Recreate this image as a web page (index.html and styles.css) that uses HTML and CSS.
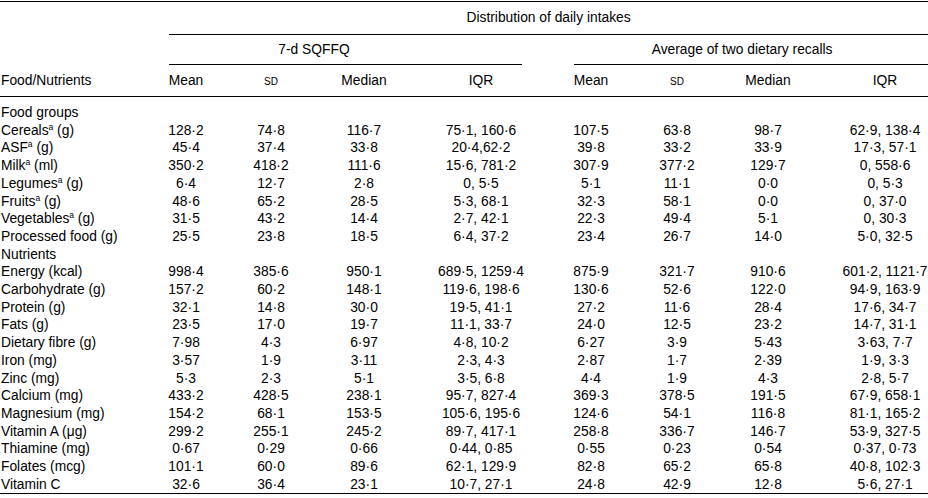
FILE: index.html
```html
<!DOCTYPE html>
<html lang="en">
<head>
<meta charset="utf-8">
<title>Distribution of daily intakes</title>
<link rel="stylesheet" href="styles.css">
</head>
<body>
<table class="tbl">
  <colgroup>
    <col class="c-label">
    <col class="c-mean">
    <col class="c-sd">
    <col class="c-med">
    <col class="c-iqr">
    <col class="c-mean2">
    <col class="c-sd2">
    <col class="c-med2">
    <col class="c-iqr2">
  </colgroup>
  <thead>
    <tr class="h1">
      <th></th>
      <th colspan="8"><div class="rule rule-dist">Distribution of daily intakes</div></th>
    </tr>
    <tr class="h2">
      <th></th>
      <th colspan="4"><div class="rule rule-ffq">7-d SQFFQ</div></th>
      <th colspan="4"><div class="rule rule-avg">Average of two dietary recalls</div></th>
    </tr>
    <tr class="h3">
      <th class="lbl">Food/Nutrients</th>
      <th>Mean</th>
      <th><span class="sc">sd</span></th>
      <th>Median</th>
      <th>IQR</th>
      <th>Mean</th>
      <th><span class="sc">sd</span></th>
      <th>Median</th>
      <th class="last">IQR</th>
    </tr>
  </thead>
  <tbody>
    <tr class="first"><td class="lbl">Food groups</td><td></td><td></td><td></td><td></td><td></td><td></td><td></td><td class="last"></td></tr>
    <tr><td class="lbl">Cereals<sup>a</sup> (g)</td><td>128·2</td><td>74·8</td><td>116·7</td><td>75·1, 160·6</td><td>107·5</td><td>63·8</td><td>98·7</td><td class="last">62·9, 138·4</td></tr>
    <tr><td class="lbl">ASF<sup>a</sup> (g)</td><td>45·4</td><td>37·4</td><td>33·8</td><td>20·4,62·2</td><td>39·8</td><td>33·2</td><td>33·9</td><td class="last">17·3, 57·1</td></tr>
    <tr><td class="lbl">Milk<sup>a</sup> (ml)</td><td>350·2</td><td>418·2</td><td>111·6</td><td>15·6, 781·2</td><td>307·9</td><td>377·2</td><td>129·7</td><td class="last">0, 558·6</td></tr>
    <tr><td class="lbl">Legumes<sup>a</sup> (g)</td><td>6·4</td><td>12·7</td><td>2·8</td><td>0, 5·5</td><td>5·1</td><td>11·1</td><td>0·0</td><td class="last">0, 5·3</td></tr>
    <tr><td class="lbl">Fruits<sup>a</sup> (g)</td><td>48·6</td><td>65·2</td><td>28·5</td><td>5·3, 68·1</td><td>32·3</td><td>58·1</td><td>0·0</td><td class="last">0, 37·0</td></tr>
    <tr><td class="lbl">Vegetables<sup>a</sup> (g)</td><td>31·5</td><td>43·2</td><td>14·4</td><td>2·7, 42·1</td><td>22·3</td><td>49·4</td><td>5·1</td><td class="last">0, 30·3</td></tr>
    <tr><td class="lbl">Processed food (g)</td><td>25·5</td><td>23·8</td><td>18·5</td><td>6·4, 37·2</td><td>23·4</td><td>26·7</td><td>14·0</td><td class="last">5·0, 32·5</td></tr>
    <tr><td class="lbl">Nutrients</td><td></td><td></td><td></td><td></td><td></td><td></td><td></td><td class="last"></td></tr>
    <tr><td class="lbl">Energy (kcal)</td><td>998·4</td><td>385·6</td><td>950·1</td><td>689·5, 1259·4</td><td>875·9</td><td>321·7</td><td>910·6</td><td class="last">601·2, 1121·7</td></tr>
    <tr><td class="lbl">Carbohydrate (g)</td><td>157·2</td><td>60·2</td><td>148·1</td><td>119·6, 198·6</td><td>130·6</td><td>52·6</td><td>122·0</td><td class="last">94·9, 163·9</td></tr>
    <tr><td class="lbl">Protein (g)</td><td>32·1</td><td>14·8</td><td>30·0</td><td>19·5, 41·1</td><td>27·2</td><td>11·6</td><td>28·4</td><td class="last">17·6, 34·7</td></tr>
    <tr><td class="lbl">Fats (g)</td><td>23·5</td><td>17·0</td><td>19·7</td><td>11·1, 33·7</td><td>24·0</td><td>12·5</td><td>23·2</td><td class="last">14·7, 31·1</td></tr>
    <tr><td class="lbl">Dietary fibre (g)</td><td>7·98</td><td>4·3</td><td>6·97</td><td>4·8, 10·2</td><td>6·27</td><td>3·9</td><td>5·43</td><td class="last">3·63, 7·7</td></tr>
    <tr><td class="lbl">Iron (mg)</td><td>3·57</td><td>1·9</td><td>3·11</td><td>2·3, 4·3</td><td>2·87</td><td>1·7</td><td>2·39</td><td class="last">1·9, 3·3</td></tr>
    <tr><td class="lbl">Zinc (mg)</td><td>5·3</td><td>2·3</td><td>5·1</td><td>3·5, 6·8</td><td>4·4</td><td>1·9</td><td>4·3</td><td class="last">2·8, 5·7</td></tr>
    <tr><td class="lbl">Calcium (mg)</td><td>433·2</td><td>428·5</td><td>238·1</td><td>95·7, 827·4</td><td>369·3</td><td>378·5</td><td>191·5</td><td class="last">67·9, 658·1</td></tr>
    <tr><td class="lbl">Magnesium (mg)</td><td>154·2</td><td>68·1</td><td>153·5</td><td>105·6, 195·6</td><td>124·6</td><td>54·1</td><td>116·8</td><td class="last">81·1, 165·2</td></tr>
    <tr><td class="lbl">Vitamin A (μg)</td><td>299·2</td><td>255·1</td><td>245·2</td><td>89·7, 417·1</td><td>258·8</td><td>336·7</td><td>146·7</td><td class="last">53·9, 327·5</td></tr>
    <tr><td class="lbl">Thiamine (mg)</td><td>0·67</td><td>0·29</td><td>0·66</td><td>0·44, 0·85</td><td>0·55</td><td>0·23</td><td>0·54</td><td class="last">0·37, 0·73</td></tr>
    <tr><td class="lbl">Folates (mcg)</td><td>101·1</td><td>60·0</td><td>89·6</td><td>62·1, 129·9</td><td>82·8</td><td>65·2</td><td>65·8</td><td class="last">40·8, 102·3</td></tr>
    <tr class="end"><td class="lbl">Vitamin C</td><td>32·6</td><td>36·4</td><td>23·1</td><td>10·7, 27·1</td><td>24·8</td><td>42·9</td><td>12·8</td><td class="last">5·6, 27·1</td></tr>
  </tbody>
</table>
</body>
</html>
```

FILE: styles.css
```css
html, body {
  margin: 0;
  padding: 0;
  background: #ffffff;
}

body {
  font-family: "Liberation Sans", Arial, sans-serif;
  font-size: 13.8px;
  color: #000000;
}

.tbl {
  width: 928px;
  table-layout: fixed;
  border-collapse: separate;
  border-spacing: 0;
  margin-top: 1px;
  border-top: 1px solid #000;
}

.c-label { width: 160px; }
.c-mean  { width: 52px; }
.c-sd    { width: 118px; }
.c-med   { width: 68px; }
.c-iqr   { width: 166px; }
.c-mean2 { width: 54px; }
.c-sd2   { width: 118px; }
.c-med2  { width: 64px; }
.c-iqr2  { width: 128px; }

th, td {
  padding: 0;
  font-weight: normal;
  text-align: center;
  white-space: nowrap;
  vertical-align: middle;
}

th.lbl, td.lbl {
  text-align: left;
  padding-left: 1px;
}

th.last, td.last {
  padding-left: 42px;
}

.rule {
  border-bottom: 1px solid #000;
  box-sizing: border-box;
}

.rule-dist {
  margin-left: 9px;
  height: 33px;
  line-height: 32px;
}

.h2 .rule {
  height: 30px;
  line-height: 29px;
}

.rule-ffq {
  margin-left: 9px;
  margin-right: 42px;
  padding-right: 63px;
}

.rule-avg {
  margin-left: 10px;
  padding-right: 18px;
}

.h3 th {
  height: 32px;
  box-sizing: border-box;
  line-height: 31px;
  border-bottom: 1px solid #000;
}

.sc {
  font-variant: small-caps;
}

tbody td {
  height: 17.7px;
  line-height: 17.7px;
}

tbody tr.first td {
  padding-top: 7px;
}

tbody tr.end td {
  border-bottom: 1px solid #000;
}

sup {
  font-size: 8.5px;
  line-height: 0;
  vertical-align: 5px;
}
```
